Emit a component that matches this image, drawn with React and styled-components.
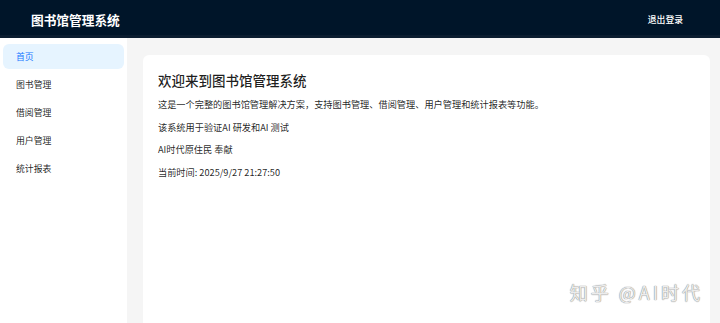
import React from "react";
import styled, { createGlobalStyle } from "styled-components";

const GlobalStyle = createGlobalStyle`
  html, body {
    margin: 0;
    padding: 0;
    height: 100%;
    overflow: hidden;
  }
  body {
    font-family: "Noto Sans CJK SC", "Noto Sans", sans-serif;
    color: rgba(0, 0, 0, 0.88);
    background: #f5f5f5;
  }
`;

const Layout = styled.div`
  height: 100vh;
  display: flex;
  flex-direction: column;
  position: relative;
`;

const Header = styled.header`
  height: 38px;
  flex: 0 0 38px;
  background: #001529;
  display: flex;
  align-items: center;
  justify-content: space-between;
  padding: 0 37px 0 31px;
  box-shadow: inset 0 -3px 0 #0b1d30;
  box-sizing: border-box;
`;

const Title = styled.h1`
  margin: 0;
  font-size: 12.7px;
  font-weight: 700;
  color: #fff;
  letter-spacing: 0;
`;

const Logout = styled.a`
  font-size: 8.8px;
  font-weight: 500;
  color: #fff;
  cursor: pointer;
`;

const Body = styled.div`
  flex: 1;
  display: flex;
  min-height: 0;
`;

const Sidebar = styled.nav`
  width: 127px;
  flex: 0 0 127px;
  background: #fff;
  padding-top: 6px;
  box-sizing: border-box;
`;

const MenuItem = styled.div`
  height: 25px;
  margin: 0 3px 3px;
  padding-left: 13px;
  display: flex;
  align-items: center;
  border-radius: 6px;
  font-size: 8.9px;
  background: ${({ $active }) => ($active ? "#e6f4ff" : "transparent")};
  color: ${({ $active }) => ($active ? "#1677ff" : "rgba(0, 0, 0, 0.88)")};
`;

const Content = styled.main`
  flex: 1;
  display: flex;
  padding: 17px 10px 0 16px;
  min-width: 0;
`;

const Card = styled.section`
  flex: 1;
  background: #fff;
  border-radius: 6px 6px 0 0;
  padding: 15px;
`;

const Heading = styled.h2`
  margin: 0 0 8px;
  font-size: 13.5px;
  line-height: 20px;
  font-weight: 500;
`;

const Para = styled.p`
  margin: 0 0 9px;
  font-size: 9.2px;
  line-height: 13.5px;
`;

const Watermark = styled.div`
  position: absolute;
  right: 17px;
  bottom: 20px;
  font-size: 18px;
  line-height: 22px;
  color: #ececec;
  text-shadow: 0 0 1px #8c8c8c, 0 0 1px #8c8c8c;
  letter-spacing: 3px;
`;

const menu = ["首页", "图书管理", "借阅管理", "用户管理", "统计报表"];

export default function App() {
  return (
    <Layout>
      <GlobalStyle />
      <Header>
        <Title>图书馆管理系统</Title>
        <Logout>退出登录</Logout>
      </Header>
      <Body>
        <Sidebar>
          {menu.map((m, i) => (
            <MenuItem key={m} $active={i === 0}>
              {m}
            </MenuItem>
          ))}
        </Sidebar>
        <Content>
          <Card>
            <Heading>欢迎来到图书馆管理系统</Heading>
            <Para>这是一个完整的图书馆管理解决方案，支持图书管理、借阅管理、用户管理和统计报表等功能。</Para>
            <Para>该系统用于验证AI 研发和AI 测试</Para>
            <Para>AI时代原住民 奉献</Para>
            <Para>当前时间: 2025/9/27 21:27:50</Para>
          </Card>
        </Content>
      </Body>
      <Watermark>知乎 @AI时代</Watermark>
    </Layout>
  );
}
